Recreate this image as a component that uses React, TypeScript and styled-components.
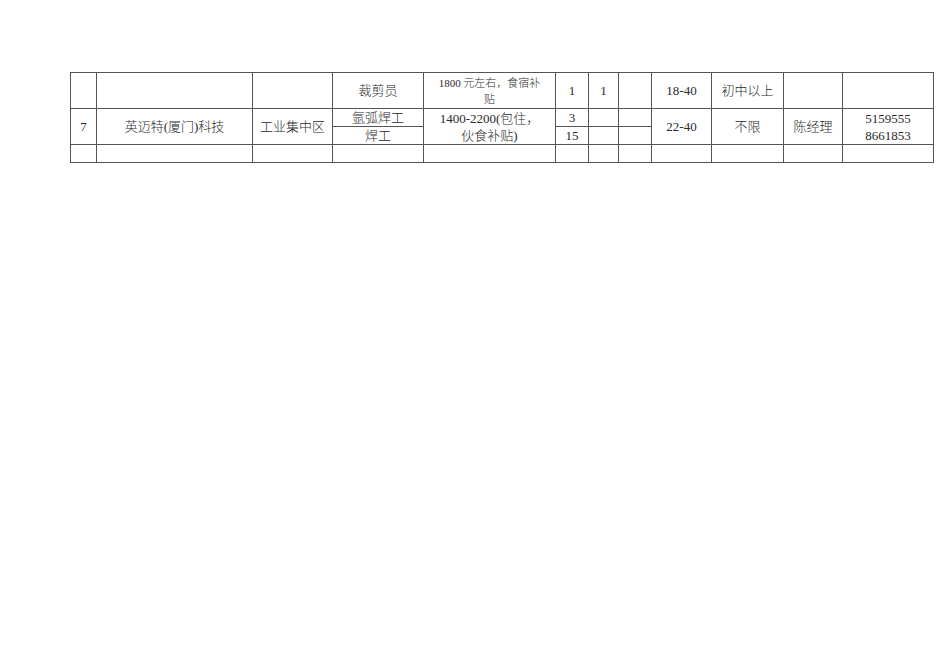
import React from 'react';
import styled, { createGlobalStyle } from 'styled-components';

const GlobalStyle = createGlobalStyle`
  html, body {
    margin: 0;
    padding: 0;
    background: #ffffff;
  }
`;

const Page = styled.div`
  width: 950px;
  height: 672px;
  padding: 72px 0 0 70px;
  box-sizing: border-box;
  background: #ffffff;
  font-family: 'Liberation Serif', 'Noto Sans CJK SC', serif;
  font-weight: 300;
  color: #2a2a2a;
`;

const Sheet = styled.table`
  border-collapse: collapse;
  table-layout: fixed;
  width: 864px;
  border: 1px solid #333;
`;

const Row = styled.tr<{ $h: number }>`
  height: ${(p) => p.$h}px;
`;

const Cell = styled.td<{ $small?: boolean }>`
  border: 1px solid #555;
  padding: 0;
  text-align: center;
  vertical-align: middle;
  font-size: ${(p) => (p.$small ? '11px' : '13px')};
  line-height: ${(p) => (p.$small ? '16px' : '17px')};
  white-space: nowrap;
  overflow: hidden;
`;

const widths = [26, 156, 80, 91, 132, 33, 30, 33, 60, 72, 59, 91];

export default function App() {
  return (
    <Page>
      <GlobalStyle />
      <Sheet>
        <colgroup>
          {widths.map((w, i) => (
            <col key={i} style={{ width: w }} />
          ))}
        </colgroup>
        <tbody>
          <Row $h={36}>
            <Cell />
            <Cell />
            <Cell />
            <Cell>裁剪员</Cell>
            <Cell $small>
              1800 元左右，食宿补
              <br />
              贴
            </Cell>
            <Cell>1</Cell>
            <Cell>1</Cell>
            <Cell />
            <Cell>18-40</Cell>
            <Cell>初中以上</Cell>
            <Cell />
            <Cell />
          </Row>
          <Row $h={18}>
            <Cell rowSpan={2}>7</Cell>
            <Cell rowSpan={2}>英迈特(厦门)科技</Cell>
            <Cell rowSpan={2}>工业集中区</Cell>
            <Cell>氩弧焊工</Cell>
            <Cell rowSpan={2}>
              1400-2200(包住，
              <br />
              伙食补贴)
            </Cell>
            <Cell>3</Cell>
            <Cell />
            <Cell />
            <Cell rowSpan={2}>22-40</Cell>
            <Cell rowSpan={2}>不限</Cell>
            <Cell rowSpan={2}>陈经理</Cell>
            <Cell rowSpan={2}>
              5159555
              <br />
              8661853
            </Cell>
          </Row>
          <Row $h={18}>
            <Cell>焊工</Cell>
            <Cell>15</Cell>
            <Cell />
            <Cell />
          </Row>
          <Row $h={18}>
            {widths.map((_, i) => (
              <Cell key={i} />
            ))}
          </Row>
        </tbody>
      </Sheet>
    </Page>
  );
}
